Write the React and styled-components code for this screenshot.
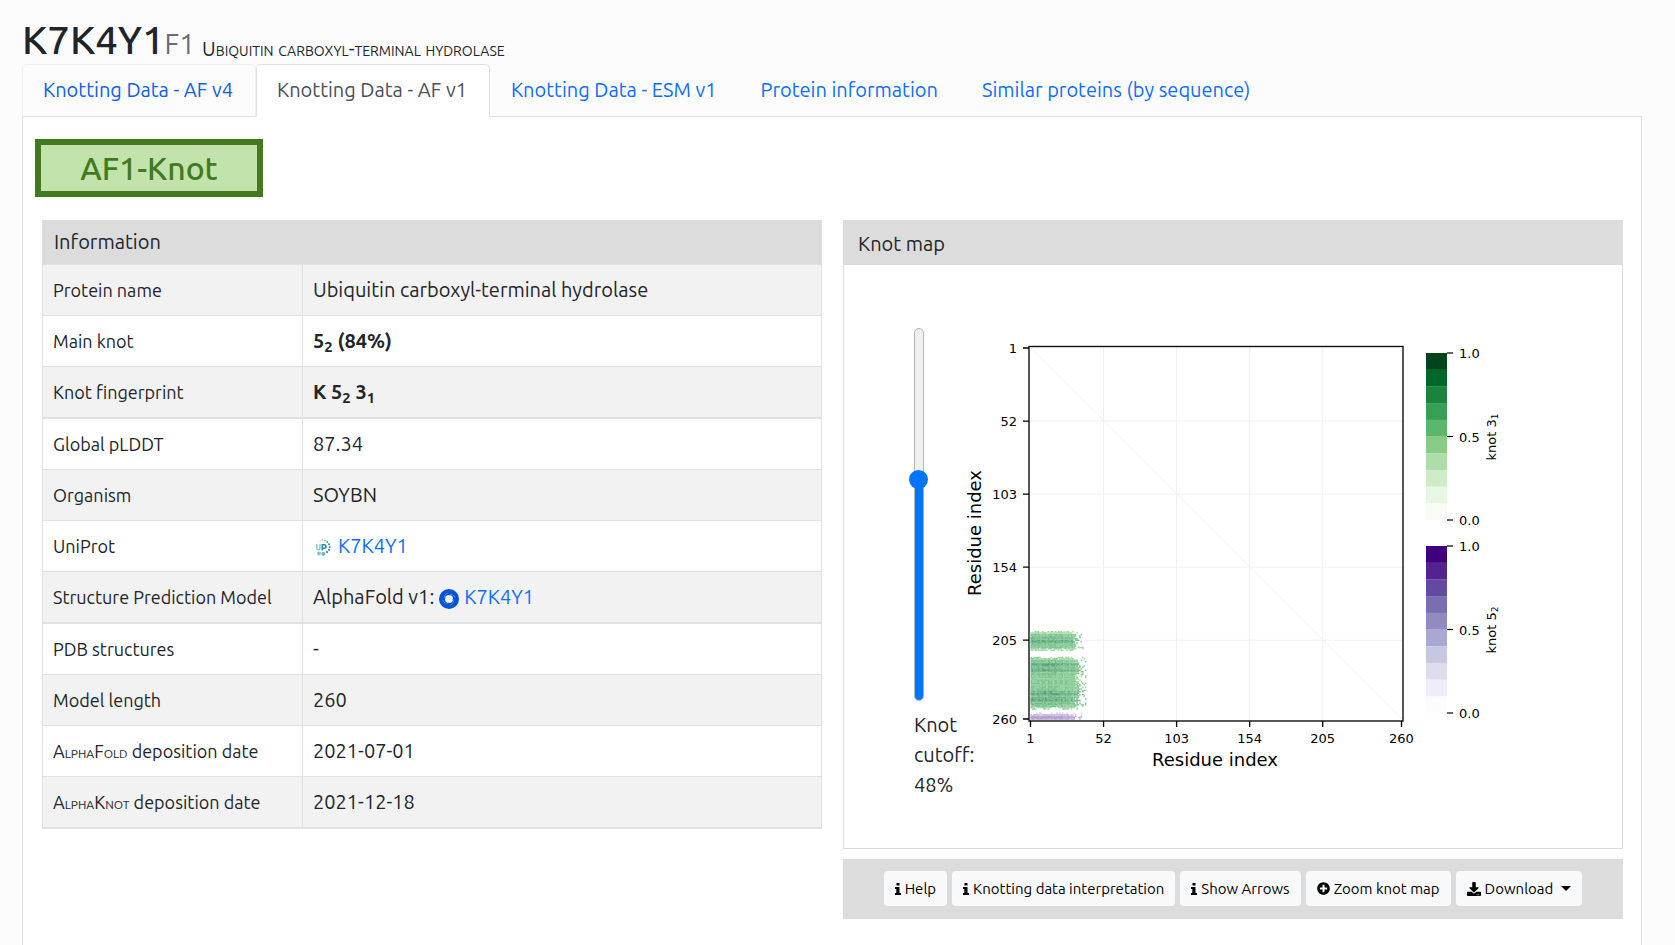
import React, { useState } from "react";
import styled, { createGlobalStyle } from "styled-components";
import { FaPlusCircle, FaDownload } from "react-icons/fa";

const GlobalStyle = createGlobalStyle`
  *, *::before, *::after { box-sizing: border-box; }
  body {
    margin: 0;
    background: #fcfcfc;
    color: #212529;
    font-family: Ubuntu, "Noto Sans", "Open Sans", sans-serif;
    font-size: 20px;
    line-height: 30px;
  }
`;

const Page = styled.main`
  min-height: 100vh;
  padding: 16px 33px 0 22px;
  display: flex;
  flex-direction: column;
`;

const Title = styled.h1`
  margin: 0;
  display: flex;
  align-items: baseline;
  font-size: 40px;
  font-weight: 550;
  line-height: 48px;
`;

const Fragment = styled.small`
  margin-right: 7px;
  color: #6c6c6c;
  font-size: 28px;
  font-weight: 400;
  line-height: 28px;
`;

const ProteinName = styled.span`
  align-self: flex-end;
  font-size: 20px;
  font-weight: 400;
  line-height: 30px;
`;

const SmallLetters = styled.span`
  font-size: 14px;
  line-height: 1;
  text-transform: uppercase;
`;

const LabelSmallLetters = styled(SmallLetters)`
  font-size: 12px;
`;

const Tabs = styled.nav`
  display: flex;
  border-bottom: 1px solid #dee2e6;
`;

const Tab = styled.a`
  height: 53px;
  margin-bottom: -1px;
  padding: 10px 22px 10px 20px;
  border: 1px solid transparent;
  border-radius: 5px 5px 0 0;
  color: #0d6efd;
  text-decoration: none;
  white-space: nowrap;
  ${({ $hovered }) => $hovered && `
    border-color: #eef0f2 #eef0f2 #dee2e6;
    color: #0b60e8;
  `}
  ${({ $active }) => $active && `
    border-color: #dee2e6 #dee2e6 #fff;
    background: #fff;
    color: #495057;
  `}
`;

const TabPanel = styled.section`
  flex: 1;
  padding: 22px 18px 26px 19px;
  border: 1px solid #dee2e6;
  border-top: 0;
  background: #fff;
`;

const StatusBadge = styled.div`
  width: 228px;
  margin: 0 0 23px -7px;
  border: 6px solid #437a1f;
  background: #c2e3ab;
  color: #437a1f;
  font-size: 32px;
  font-weight: 550;
  line-height: 46px;
  text-align: center;
`;

const Columns = styled.div`
  display: grid;
  grid-template-columns: minmax(0, 1fr) minmax(0, 1fr);
  gap: 21px;
  align-items: start;
`;

const InfoTable = styled.table`
  width: 100%;
  border-spacing: 0;
  border: 1px solid #dee2e6;
  border-width: 0 1px;
  table-layout: fixed;
`;

const TableTitle = styled.th`
  height: 45px;
  padding: 0 11px 1px;
  border-bottom: 1px solid #dee2e6;
  background: #dcdcdc;
  font-weight: 400;
  text-align: left;
`;

const InfoRow = styled.tr`
  height: ${({ $last }) => ($last ? 52 : 51)}px;
  background: ${({ $shaded }) => ($shaded ? "#f2f2f2" : "#fff")};
  > * { border-bottom: ${({ $last }) => ($last ? 2 : 1)}px solid #dee2e6; }
`;

const InfoLabel = styled.th`
  width: 260px;
  padding: 0 10px;
  border-right: 1px solid #dee2e6;
  font-size: 18px;
  font-weight: 400;
  text-align: left;
  white-space: nowrap;
`;

const InfoValue = styled.td`
  padding: 0 10px;
  sub {
    font-size: 15px;
    line-height: 0;
    vertical-align: -4px;
  }
`;

const Link = styled.a`
  color: #0d6efd;
  text-decoration: none;
`;

const SourceLine = styled.span`
  display: flex;
  align-items: center;
  gap: 5px;
  svg {
    flex: none;
    margin-top: 3px;
  }
`;

const MapCard = styled.section`
  border: 1px solid #dcdcdc;
`;

const MapTitle = styled.h2`
  margin: 0;
  padding: 8px 14px 6px;
  background: #dcdcdc;
  font-size: 20px;
  font-weight: 400;
`;

const MapBody = styled.div`
  display: flex;
  justify-content: center;
  align-items: flex-start;
  padding: 63px 18px 48px 20px;
`;

const CutoffField = styled.label`
  width: 48px;
  display: flex;
  flex-direction: column;
  gap: 9px;
`;

const CutoffSlider = styled.input`
  appearance: none;
  writing-mode: vertical-lr;
  direction: rtl;
  width: 10px;
  height: 373px;
  margin: 0;
  border: 1px solid #b2b2b2;
  border-radius: 5px;
  background: linear-gradient(to top, #0075ff ${({ $fill }) => $fill}%, #efefef ${({ $fill }) => $fill}%);
  &::-webkit-slider-runnable-track {
    width: 8px;
  }
  &::-webkit-slider-thumb {
    appearance: none;
    width: 19px;
    height: 19px;
    margin-left: -6px;
    border-radius: 50%;
    background: #0075ff;
  }
`;

const Chart = styled.svg`
  width: 592px;
  max-width: calc(100% - 48px);
  height: auto;
  font-family: "DejaVu Sans", sans-serif;
`;

const Toolbar = styled.div`
  display: flex;
  flex-wrap: wrap;
  justify-content: center;
  gap: 5px;
  margin-top: 10px;
  padding: 12px 16px 13px;
  background: #dcdcdc;
`;

const ToolButton = styled.button`
  display: flex;
  align-items: center;
  gap: 4px;
  height: 35px;
  padding: 0 11px;
  border: 0;
  border-radius: 4px;
  background: #f8f9fa;
  color: #000;
  font: 15px/24px Ubuntu, "Noto Sans", "Open Sans", sans-serif;
  white-space: nowrap;
`;

const MenuArrow = styled.span`
  margin-left: 4px;
  border: 5px solid transparent;
  border-top-color: #000;
  border-bottom: 0;
`;

function SmallCaps({ children, letters: Letters = SmallLetters }) {
  return children.split(/([a-z]+)/).map((part, i) =>
    i % 2 ? <Letters key={i}>{part}</Letters> : part
  );
}

function InfoIcon() {
  return (
    <svg width="6" height="12" viewBox="0 0 6 12" aria-hidden="true">
      <path d="M1.500 0h3v2.500h-3zM0 4h4.500v6H6v2H0v-2h1.300V6H0z" />
    </svg>
  );
}

function UniProtLogo() {
  const dots = [
    [7, 3, 0.6, "#bfe2e3"], [9.5, 2.3, 0.7, "#8cc9cf"], [12, 2.6, 0.8, "#4aa5b5"], [14.3, 4, 0.9, "#2b9aaa"],
    [16, 6.2, 1, "#2b8ba1"], [16.6, 9, 1, "#2b8ba1"], [16, 11.8, 1.1, "#2b8ba1"], [14, 14, 1.2, "#3f9fb0"],
    [5, 4.5, 0.5, "#cfeaea"], [6, 15.5, 1.9, "#7fcdcb"], [10.4, 15.8, 1.9, "#5cb5bf"],
  ];
  return (
    <svg width="20" height="20" viewBox="0 0 20 20" aria-label="UniProt">
      {dots.map(([x, y, r, c]) => <circle key={`${x}-${y}`} cx={x} cy={y} r={r} fill={c} />)}
      <path d="M3.800 6v4q0 1.800 1.600 1.800t1.600-1.800v-4" fill="none" stroke="#86cbcd" strokeWidth="1.500" />
      <path d="M9.300 12.500v-5.700h1.700q2 0 2 1.700t-2 1.700h-1.700" fill="none" stroke="#2b8ba1" strokeWidth="1.600" />
    </svg>
  );
}

function AlphaFoldLogo() {
  return (
    <svg width="20" height="20" viewBox="0 0 20 20" aria-label="AlphaFold">
      <circle cx="10" cy="10" r="10" fill="#0053d6" />
      <circle cx="10" cy="10" r="4" fill="#f2f2f2" />
      <g fill="none" stroke="#5f94e6" strokeWidth="0.800">
        <path d="M6.200 10Q4.600 5.800 8.800 3.800" />
        <path d="M10 6.200Q14.500 4.600 16.200 8.800" />
        <path d="M13.800 10Q15.400 14.200 11.200 16.200" />
        <path d="M10 13.800Q5.500 15.400 3.800 11.200" />
      </g>
    </svg>
  );
}

const infoGroups = [
  [
    ["Protein name", "Ubiquitin carboxyl-terminal hydrolase"],
    ["Main knot", <b>5<sub>2</sub> (84%)</b>],
    ["Knot fingerprint", <b>K 5<sub>2</sub> 3<sub>1</sub></b>],
  ],
  [
    ["Global pLDDT", "87.34"],
    ["Organism", "SOYBN"],
    ["UniProt", <SourceLine><UniProtLogo /><Link href="#uniprot">K7K4Y1</Link></SourceLine>],
    ["Structure Prediction Model", <SourceLine>AlphaFold v1: <AlphaFoldLogo /><Link href="#alphafold">K7K4Y1</Link></SourceLine>],
  ],
  [
    ["PDB structures", "-"],
    ["Model length", "260"],
    [<><SmallCaps letters={LabelSmallLetters}>AlphaFold</SmallCaps> deposition date</>, "2021-07-01"],
    [<><SmallCaps letters={LabelSmallLetters}>AlphaKnot</SmallCaps> deposition date</>, "2021-12-18"],
  ],
];

function InformationTable() {
  let index = 0;
  return (
    <InfoTable>
      <colgroup>
        <col width="260" />
        <col />
      </colgroup>
      <thead>
        <tr><TableTitle colSpan={2}>Information</TableTitle></tr>
      </thead>
      {infoGroups.map((rows, g) => (
        <tbody key={g}>
          {rows.map(([label, value], r) => {
            const shaded = index++ % 2 === 0;
            return (
              <InfoRow key={r} $shaded={shaded} $last={r === rows.length - 1}>
                <InfoLabel scope="row">{label}</InfoLabel>
                <InfoValue>{value}</InfoValue>
              </InfoRow>
            );
          })}
        </tbody>
      ))}
    </InfoTable>
  );
}

const GREENS = ["#00441b", "#006729", "#1a843f", "#37a055", "#5bb86a", "#86cc85", "#addea7", "#ceecc8", "#e8f6e4", "#f7fcf5"];
const PURPLES = ["#3f007d", "#53238f", "#65489f", "#796eb2", "#918bc2", "#a9a8d2", "#c6c7e1", "#dedded", "#efeef6", "#fcfbfd"];
const TICKS = [1, 52, 103, 154, 205, 260];
const CELL = 371 / 259;
const axisX = (i) => 68.5 + (i - 1) * CELL;
const axisY = (i) => 20 + (i - 1) * CELL;

/* Knotted subchains: rows of residue indices, how far they reach, and where the signal peaks. */
const GREEN_CELLS = ["#a9dcab", "#90d09b", "#80c693", "#70b988", "#5fa67c"];
const PURPLE_CELLS = ["#ddd4ea", "#cdbfe1", "#c0afda", "#b5a1d3", "#ad97ce"];
const BLOCKS = [
  { from: 199, to: 212, reach: 34, peaks: [205, 206], shades: GREEN_CELLS },
  { from: 217, to: 253, reach: 36, peaks: [222, 223, 226, 242, 243, 246, 247], shades: GREEN_CELLS },
  { from: 256, to: 260, reach: 33, peaks: [260], shades: PURPLE_CELLS },
];

function buildCells() {
  let seed = 7;
  const random = () => {
    seed = (seed * 1664525 + 1013904223) % 4294967296;
    return seed / 4294967296;
  };
  const layers = {};
  BLOCKS.forEach(({ from, to, reach, peaks, shades }) => {
    for (let row = from; row <= to; row++) {
      const edge = Math.min(row - from, to === 260 ? 9 : to - row);
      const near = Math.min(4, ...peaks.map((p) => Math.abs(p - row)));
      const rowReach = reach - Math.max(0, 3 - edge) - Math.floor(random() * 3);
      for (let col = 1; col < reach + 4; col++) {
        const margin = rowReach - col;
        const density = margin > 2 ? 1 : margin > 0 ? 0.85 : 0.22;
        const present = density * (edge === 0 ? 0.5 : edge === 1 ? 0.85 : 1);
        if (random() > present) continue;
        const level = 3.7 - near * 0.45 - Math.max(0, col - 18) * 0.06 - (edge < 2 ? 1 : 0)
          - (row % 4 === 0 ? 0.7 : 0) - (col % 4 === 0 ? 0.5 : 0) + (random() - 0.5) * 1.2;
        const shade = shades[Math.max(margin > 3 && edge > 1 ? 1 : 0, Math.min(4, Math.round(level)))];
        const d = `M${axisX(col).toFixed(2)} ${(axisY(row) - CELL / 2).toFixed(2)}h1.500v1.500h-1.500z`;
        layers[shade] = (layers[shade] || "") + d;
      }
    }
  });
  return Object.entries(layers);
}

const CELLS = buildCells();

function ColorBar({ y, colors, knot, index }) {
  return (
    <g>
      {colors.map((c, i) => (
        <rect key={c} x="464" y={y + i * 16.7} width="21" height="16.900" fill={c} />
      ))}
      {["1.0", "0.5", "0.0"].map((value, i) => (
        <g key={value}>
          <path d={`M485 ${y + i * 83.5}h6`} stroke="#000" strokeWidth="1.200" />
          <text x="497" y={y + i * 83.5 + 5} fontSize="13">{value}</text>
        </g>
      ))}
      <text transform={`translate(534 ${y + 84}) rotate(-90)`} textAnchor="middle" fontSize="13">
        knot {knot}<tspan fontSize="9" dy="2">{index}</tspan>
      </text>
    </g>
  );
}

function KnotMap() {
  return (
    <Chart viewBox="0 0 592 450" role="img" aria-label="Knot map">
      {TICKS.slice(1, 5).map((t) => (
        <path key={t} d={`M${axisX(t)} 18V393M67 ${axisY(t)}H441`} stroke="#f0f0f0" fill="none" />
      ))}
      <path d="M69 20L440 391" stroke="#e8e8e8" strokeWidth="0.600" />
      {CELLS.map(([shade, d]) => <path key={shade} d={d} fill={shade} />)}
      <rect x="67" y="18.500" width="374" height="374.500" fill="none" stroke="#111" strokeWidth="1.400" />
      {TICKS.map((t) => (
        <g key={t} fontSize="13">
          <path d={`M${axisX(t)} 393v6M67 ${axisY(t)}h-6`} stroke="#000" strokeWidth="1.300" />
          <text x={axisX(t)} y="415" textAnchor="middle">{t}</text>
          <text x="55" y={axisY(t) + 5} textAnchor="end">{t}</text>
        </g>
      ))}
      <text x="253" y="438" textAnchor="middle" fontSize="18">Residue index</text>
      <text transform="translate(19 205) rotate(-90)" textAnchor="middle" fontSize="18">Residue index</text>
      <ColorBar y={25} colors={GREENS} knot="3" index="1" />
      <ColorBar y={218} colors={PURPLES} knot="5" index="2" />
    </Chart>
  );
}

const tabs = [
  { label: "Knotting Data - AF v4", hovered: true },
  { label: "Knotting Data - AF v1", active: true },
  { label: "Knotting Data - ESM v1" },
  { label: "Protein information" },
  { label: "Similar proteins (by sequence)" },
];

export default function App() {
  const [cutoff, setCutoff] = useState(48);
  return (
    <>
      <GlobalStyle />
      <Page>
        <Title>
          K7K4Y1<Fragment>F1</Fragment>
          <ProteinName><SmallCaps>Ubiquitin carboxyl-terminal hydrolase</SmallCaps></ProteinName>
        </Title>
        <Tabs>
          {tabs.map(({ label, hovered, active }) => (
            <Tab key={label} href="#tab" $hovered={hovered} $active={active} aria-current={active ? "page" : undefined}>
              {label}
            </Tab>
          ))}
        </Tabs>
        <TabPanel>
          <StatusBadge>AF1-Knot</StatusBadge>
          <Columns>
            <InformationTable />
            <div>
              <MapCard>
                <MapTitle>Knot map</MapTitle>
                <MapBody>
                  <CutoffField>
                    <CutoffSlider
                      type="range"
                      min="0"
                      max="80"
                      value={cutoff}
                      $fill={(cutoff / 80) * 100}
                      onChange={(e) => setCutoff(Number(e.target.value))}
                    />
                    <span>Knot cutoff: {cutoff}%</span>
                  </CutoffField>
                  <KnotMap />
                </MapBody>
              </MapCard>
              <Toolbar>
                <ToolButton type="button"><InfoIcon />Help</ToolButton>
                <ToolButton type="button"><InfoIcon />Knotting data interpretation</ToolButton>
                <ToolButton type="button"><InfoIcon />Show Arrows</ToolButton>
                <ToolButton type="button"><FaPlusCircle size={13} />Zoom knot map</ToolButton>
                <ToolButton type="button"><FaDownload size={14} />Download<MenuArrow /></ToolButton>
              </Toolbar>
            </div>
          </Columns>
        </TabPanel>
      </Page>
    </>
  );
}
